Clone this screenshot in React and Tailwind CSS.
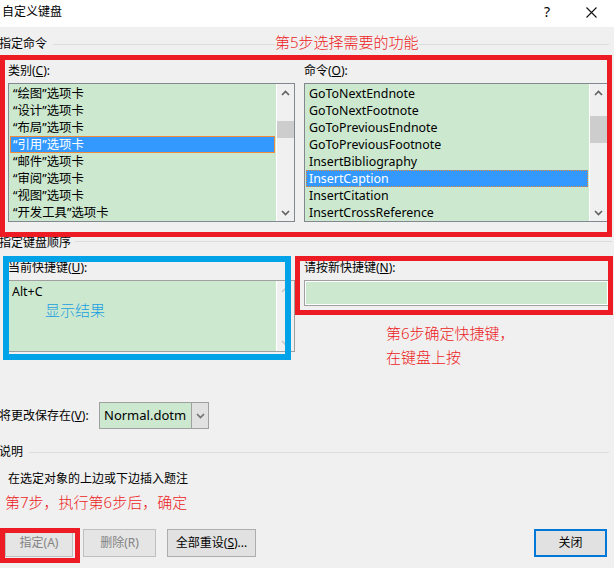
import React from "react";

const categories = [
  "“绘图”选项卡",
  "“设计”选项卡",
  "“布局”选项卡",
  "“引用”选项卡",
  "“邮件”选项卡",
  "“审阅”选项卡",
  "“视图”选项卡",
  "“开发工具”选项卡",
];

const commands = [
  "GoToNextEndnote",
  "GoToNextFootnote",
  "GoToPreviousEndnote",
  "GoToPreviousFootnote",
  "InsertBibliography",
  "InsertCaption",
  "InsertCitation",
  "InsertCrossReference",
];

const Chevron = ({ up, color = "#606060" }) => (
  <svg width="9" height="6" viewBox="0 0 9 6">
    <path
      d={up ? "M1 5 L4.5 1.5 L8 5" : "M1 1 L4.5 4.5 L8 1"}
      fill="none"
      stroke={color}
      strokeWidth="1.6"
    />
  </svg>
);

const ScrollBar = ({ thumb, disabled }) => (
  <div className="flex w-[17px] flex-col bg-[#f0f0f0]">
    <div className="flex h-[17px] items-center justify-center">
      <Chevron up color={disabled ? "#c8c8c8" : "#606060"} />
    </div>
    {thumb && <div className={thumb} />}
    <div className="flex-1" />
    <div className="flex h-[17px] items-center justify-center">
      <Chevron color={disabled ? "#c8c8c8" : "#606060"} />
    </div>
  </div>
);

const ListBox = ({ items, selected, thumb, dotted }) => (
  <div className="flex h-[139px] border border-[#828790] bg-[#cce8cf] text-[12.4px]">
    <div className="flex-1 pt-[1px] pl-[1px] pr-[1px]">
      {items.map((t, i) => (
        <div
          key={t}
          className={
            i === selected
              ? dotted
                ? "h-[17px] border border-dotted border-[#e9823a] bg-[#3399ff] pl-[2px] leading-[15px] text-white"
                : "h-[17px] border border-[#f08a3c] bg-[#3399ff] pl-[2px] leading-[15px] text-white"
              : "h-[17px] pl-[3px] leading-[17px] text-black"
          }
        >
          {t}
        </div>
      ))}
    </div>
    <div className="w-px bg-white" />
    <ScrollBar thumb={thumb} />
  </div>
);

const Header = ({ children, className }) => (
  <div className={`flex h-[16px] items-center ${className}`}>{children}</div>
);

const Button = ({ children, disabled, primary, className }) => (
  <div
    className={
      primary
        ? `flex h-[28px] items-center justify-center border-2 border-[#0078d7] bg-[#e1e1e1] text-black ${className}`
        : disabled
        ? `flex h-[28px] items-center justify-center border border-[#bfbfbf] bg-[#e5e5e5] text-[#838383] ${className}`
        : `flex h-[28px] items-center justify-center border border-[#adadad] bg-[#e1e1e1] text-black ${className}`
    }
  >
    {children}
  </div>
);

export default function App() {
  return (
    <div className="relative h-[568px] w-[614px] overflow-hidden bg-[#f0f0f0] font-['Noto_Sans','Noto_Sans_CJK_SC',sans-serif] text-[12px] text-black">
      {/* title bar */}
      <div className="flex h-[27px] items-start bg-white pt-[4px]">
        <span className="pl-[2px] leading-[16px]">自定义键盘</span>
        <span className="ml-auto text-[14px] leading-[16px]">?</span>
        <svg className="mt-[3px] ml-[36px] mr-[17px]" width="11" height="11" viewBox="0 0 11 11">
          <path d="M0.5 0.5 L10.5 10.5 M10.5 0.5 L0.5 10.5" stroke="#111" strokeWidth="1.1" />
        </svg>
      </div>

      {/* 指定命令 */}
      <Header className="mt-[9px] ml-[-1px] mr-[5px]">
        <span>指定命令</span>
        <div className="ml-[6px] h-px w-[222px] bg-[#dcdcdc]" />
        <span className="mb-[4px] text-[15px] font-light text-[#ed1c24]">第5步选择需要的功能</span>
        <div className="h-px flex-1 bg-[#dcdcdc]" />
      </Header>

      <div className="mt-[11px] flex">
        <div className="ml-[8px] w-[287px]">
          <div className="h-[16px] leading-[16px]">
            类别(<u>C</u>):
          </div>
          <div className="mt-[4px]">
            <ListBox items={categories} selected={3} thumb="mt-[20px] h-[17px] bg-[#cdcdcd]" />
          </div>
        </div>
        <div className="ml-[9px] w-[304px]">
          <div className="h-[16px] leading-[16px]">
            命令(<u>O</u>):
          </div>
          <div className="mt-[4px]">
            <ListBox items={commands} selected={5} dotted thumb="mt-[15px] h-[27px] bg-[#cdcdcd]" />
          </div>
        </div>
      </div>

      {/* 指定键盘顺序 */}
      <Header className="mt-[13px] ml-[-1px] mr-[2px]">
        <span>指定键盘顺序</span>
        <div className="mb-[4px] ml-[4px] h-px flex-1 bg-[#dcdcdc]" />
      </Header>

      <div className="mt-[9px] flex items-start">
        <div className="ml-[8px] w-[287px]">
          <div className="h-[16px] leading-[16px]">
            当前快捷键(<u>U</u>):
          </div>
          <div className="mt-[4px] flex h-[72px] border border-[#a0a0a0] bg-[#cce8cf]">
            <div className="flex-1 pl-[3px] pt-[2px]">
              <div className="h-[17px] text-[12.4px] leading-[17px]">Alt+C</div>
              <div className="pl-[33px] text-[15px] font-light leading-[20px] text-[#1a9fe0]">显示结果</div>
            </div>
            <div className="w-px bg-white" />
            <ScrollBar disabled />
          </div>
        </div>
        <div className="ml-[9px] w-[305px]">
          <div className="h-[16px] leading-[16px]">
            请按新快捷键(<u>N</u>):
          </div>
          <div className="mt-[4px] h-[26px] border border-[#a0a0a0] bg-white p-[1px]">
            <div className="h-full bg-[#cce8cf]" />
          </div>
          <div className="mt-[15px] ml-[82px] text-[15px] font-light leading-[24px] text-[#ed1c24]">
            <div>第6步确定快捷键，</div>
            <div>在键盘上按</div>
          </div>
        </div>
      </div>

      {/* save in */}
      <div className="mt-[33px] ml-[-1px] flex items-center">
        <span className="w-[100px]">
          将更改保存在(<u>V</u>):
        </span>
        <div className="flex h-[27px] w-[110px] border border-[#a0a0a0] bg-[#cce8cf]">
          <div className="flex-1 pl-[4px] text-[13px] leading-[25px]">Normal.dotm</div>
          <div className="flex w-[17px] items-center justify-center border-l border-[#a0a0a0] bg-[#e1e1e1]">
            <Chevron color="#707070" />
          </div>
        </div>
      </div>

      {/* 说明 */}
      <Header className="mt-[15px] ml-[-1px] mr-[5px]">
        <span>说明</span>
        <div className="ml-[6px] h-px flex-1 bg-[#dcdcdc]" />
      </Header>
      <div className="mt-[11px] ml-[8px] h-[16px] leading-[16px]">在选定对象的上边或下边插入题注</div>
      <div className="mt-[5px] ml-[5px] text-[15px] font-light leading-[20px] text-[#ed1c24]">
        第7步，执行第6步后，确定
      </div>

      {/* buttons */}
      <div className="mt-[17px] flex">
        <Button disabled className="ml-[5px] w-[68px]">
          指定(A)
        </Button>
        <Button disabled className="ml-[10px] w-[73px]">
          删除(R)
        </Button>
        <Button className="ml-[11px] w-[89px]">
          全部重设(<u>S</u>)...
        </Button>
        <Button primary className="ml-auto mr-[7px] w-[73px]">
          关闭
        </Button>
      </div>

      {/* annotation frames */}
      <div className="absolute left-0 top-[55px] h-[182px] w-[612px] border-[5px] border-[#ed1c24]" />
      <div className="absolute left-[3px] top-[256px] h-[104px] w-[288px] border-[6px] border-[#00a2e8]" />
      <div className="absolute left-[295px] top-[256px] h-[59px] w-[318px] border-[5px] border-[#ed1c24]" />
      <div className="absolute left-0 top-[528px] h-[35px] w-[80px] border-[5px] border-[#ed1c24]" />
    </div>
  );
}
